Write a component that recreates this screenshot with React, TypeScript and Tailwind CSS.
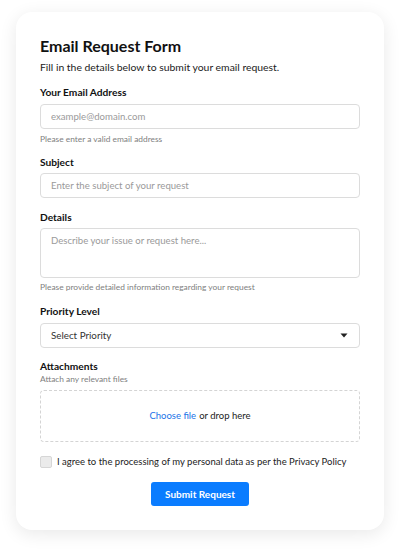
const inputCls =
  'block w-full h-[25px] rounded border border-[#dcdcdc] bg-white px-[10px] text-[9.6px] text-[#333] placeholder:text-[#9a9a9a] outline-none';

const labelCls = 'block text-[10.2px] font-bold leading-[14px] text-[#111]';
const helpCls = 'text-[8.4px] leading-[12px] text-[#808080]';

export default function App() {
  return (
    <div className="min-h-[550px] bg-white px-4 pt-3 pb-5" style={{ fontFamily: 'Lato, "Noto Sans", sans-serif' }}>
      <div className="rounded-2xl bg-white px-6 pt-6 pb-6 shadow-[0_4px_18px_rgba(0,0,0,0.09)]">
        <h1 className="text-[16px] font-bold leading-[20px] text-[#111]">Email Request Form</h1>
        <p className="mt-[3px] text-[10.4px] leading-[16px] text-[#222]">
          Fill in the details below to submit your email request.
        </p>

        <label className={`mt-[10px] ${labelCls}`}>Your Email Address</label>
        <input className={`mt-[5px] ${inputCls}`} placeholder="example@domain.com" />
        <p className={`mt-[4px] ${helpCls}`}>Please enter a valid email address</p>

        <label className={`mt-[10px] ${labelCls}`}>Subject</label>
        <input className={`mt-[4px] ${inputCls}`} placeholder="Enter the subject of your request" />

        <label className={`mt-[12px] ${labelCls}`}>Details</label>
        <textarea
          className="mt-[4px] block h-[50px] w-full resize-none rounded border border-[#dcdcdc] bg-white px-[10px] py-[5px] text-[9.6px] leading-[14px] text-[#333] placeholder:text-[#9a9a9a] outline-none"
          placeholder="Describe your issue or request here..."
        />
        <p className={`mt-[3px] ${helpCls}`}>Please provide detailed information regarding your request</p>

        <label className={`mt-[11px] ${labelCls}`}>Priority Level</label>
        <div className="mt-[5px] flex h-[25px] items-center justify-between rounded border border-[#dcdcdc] bg-white px-[10px]">
          <span className="text-[9.8px] text-[#333]">Select Priority</span>
          <svg width="8" height="5" viewBox="0 0 8 5" className="mr-[1px]">
            <path d="M0.5 0.5h7L4 4.5z" fill="#222" />
          </svg>
        </div>

        <label className={`mt-[11px] ${labelCls}`}>Attachments</label>
        <p className={helpCls}>Attach any relevant files</p>
        <div className="mt-[5px] flex h-[52px] items-center justify-center rounded border border-dashed border-[#d4d4d4] text-[9.5px]">
          <span className="text-[#1a73e8]">Choose file</span>
          <span className="ml-[3px] text-[#222]">or drop here</span>
        </div>

        <div className="mt-[13px] flex items-center gap-[5px]">
          <span className="h-[12px] w-[12px] shrink-0 rounded-[2px] border border-[#d6d6d6] bg-[#ebebeb]" />
          <span className="whitespace-nowrap text-[9.5px] leading-[14px] text-[#222]">
            I agree to the processing of my personal data as per the Privacy Policy
          </span>
        </div>

        <div className="mt-[13px] flex justify-center">
          <button
            type="button"
            className="h-[24px] w-[98px] rounded-[3px] bg-[#0a7cff] text-[10px] font-bold text-white"
          >
            Submit Request
          </button>
        </div>
      </div>
    </div>
  );
}
